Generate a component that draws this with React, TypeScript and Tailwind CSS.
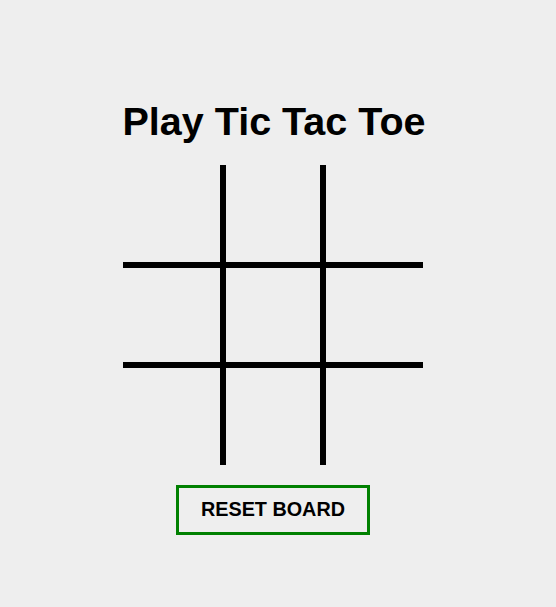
export default function App() {
  const cells = Array.from({ length: 9 }, (_, i) => i);
  const cls = (i: number) => {
    const r = Math.floor(i / 3);
    const c = i % 3;
    const parts: string[] = ["w-[100px]", "h-[100px]", "border-black", "border-solid", "box-border"];
    if (c === 0) parts.push("border-r-[3px]");
    if (c === 1) parts.push("border-l-[3px]", "border-r-[3px]");
    if (c === 2) parts.push("border-l-[3px]");
    if (r === 0) parts.push("border-b-[3px]");
    if (r === 1) parts.push("border-t-[3px]", "border-b-[3px]");
    if (r === 2) parts.push("border-t-[3px]");
    return parts.join(" ");
  };
  return (
    <div
      className="w-[556px] h-[607px] bg-[#eeeeee] flex flex-col items-center pt-[102px]"
      style={{ fontFamily: '"Liberation Sans", Arial, sans-serif' }}
    >
      <h1 className="text-[39.5px] leading-none font-bold text-black m-0 h-[39px] ml-[-8px]">Play Tic Tac Toe</h1>
      <div className="grid grid-cols-[100px_100px_100px] mt-[24px] ml-[-10px]">
        {cells.map((i) => (
          <div key={i} className={cls(i)} />
        ))}
      </div>
      <button className="mt-[20px] w-[194px] h-[50px] border-[3px] border-[#008000] bg-[#eeeeee] text-black font-bold text-[19.8px] leading-none ml-[-10px]">
        RESET BOARD
      </button>
    </div>
  );
}
